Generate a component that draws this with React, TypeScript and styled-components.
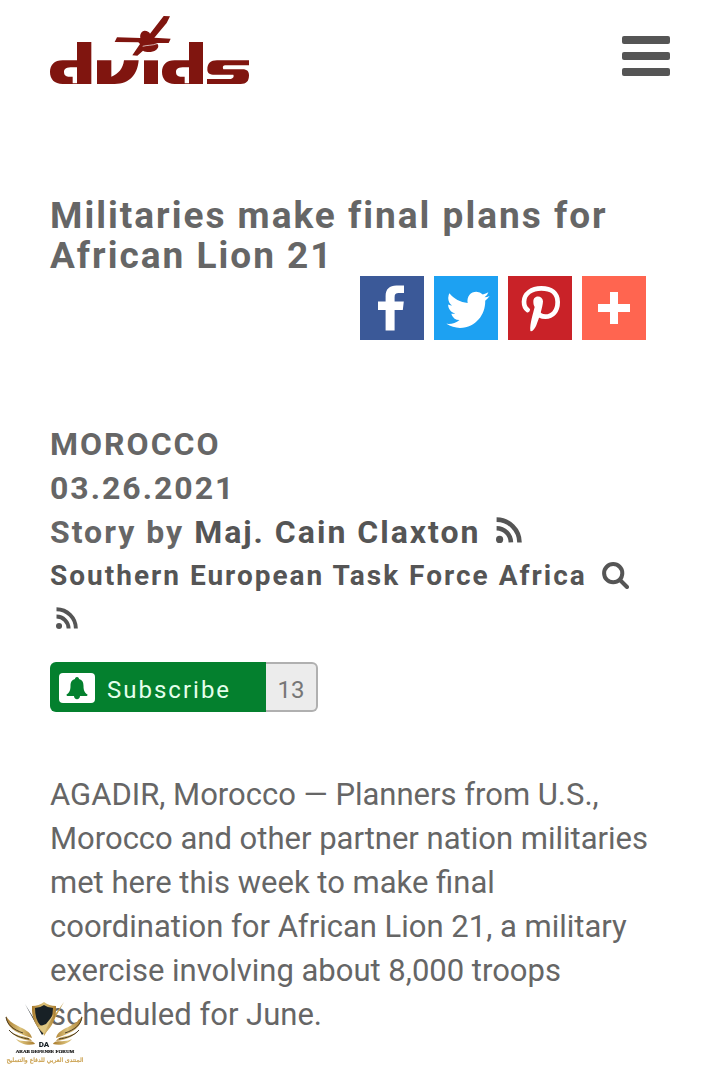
import React from "react";
import styled, { createGlobalStyle } from "styled-components";

const Global = createGlobalStyle`
  * { box-sizing: border-box; }
  body {
    margin: 0;
    background: #fff;
    color: #666;
    font-family: Roboto, "Liberation Sans", sans-serif;
  }
`;

const Page = styled.div`
  padding: 16px 50px 30px;
`;

const Header = styled.header`
  display: flex;
  justify-content: space-between;
  align-items: center;
  height: 80px;
`;

const LogoLink = styled.a`
  display: block;
  height: 80px;
  svg { display: block; }
`;

const MenuButton = styled.button`
  display: flex;
  flex-direction: column;
  gap: 8px;
  width: 48px;
  padding: 0;
  border: 0;
  background: none;
`;

const MenuBar = styled.span`
  height: 8px;
  border-radius: 2px;
  background: #555;
`;

const Title = styled.h1`
  margin: 100px 0 0;
  font-size: 37px;
  line-height: 40px;
  font-weight: 700;
  letter-spacing: 2px;
`;

const ShareRow = styled.nav`
  display: flex;
  justify-content: flex-end;
  gap: 10px;
  padding-right: 24px;
`;

const ShareLink = styled.a<{ $color: string }>`
  width: 64px;
  height: 64px;
  background: ${(p) => p.$color};
  svg { display: block; width: 64px; height: 64px; fill: #fff; }
`;

const Meta = styled.div`
  margin-top: 82px;
  font-size: 32px;
  line-height: 44px;
  font-weight: 700;
  letter-spacing: 2px;
`;

const MetaLine = styled.div<{ $small?: boolean }>`
  font-size: ${(p) => (p.$small ? "28px" : "32px")};
`;

const MetaLink = styled.a`
  color: #555;
  text-decoration: none;
`;

const IconLink = styled(MetaLink)<{ $size: number; $drop?: boolean }>`
  display: inline-block;
  margin: 0 6px;
  letter-spacing: 0;
  svg {
    width: ${(p) => p.$size}px;
    height: ${(p) => p.$size}px;
    vertical-align: ${(p) => (p.$drop ? "-4px" : "baseline")};
  }
`;

const Subscribe = styled.div`
  display: flex;
  width: 268px;
  height: 50px;
  margin-top: 20px;
`;

const SubscribeButton = styled.button`
  display: flex;
  align-items: center;
  gap: 12px;
  width: 216px;
  padding: 6px 9px 0;
  border: 0;
  border-radius: 6px 0 0 6px;
  background: #04802e;
  color: #e4ffec;
  font: 400 24px/30px Roboto, sans-serif;
  letter-spacing: 2px;
`;

const BellBox = styled.span`
  width: 36px;
  height: 30px;
  margin-top: -4px;
  border-radius: 4px;
  background: #fff;
  svg { display: block; margin: 0 auto; }
`;

const Count = styled.span`
  flex: 1;
  padding-top: 2px;
  border: 2px solid #b0b0b0;
  border-left: 0;
  border-radius: 0 6px 6px 0;
  background: #ececec;
  color: #777;
  font-size: 24px;
  line-height: 48px;
  text-align: center;
`;

const Story = styled.p`
  margin: 61px 0 0;
  font-size: 31px;
  line-height: 44px;
`;

const Watermark = styled.div`
  position: fixed;
  left: 4px;
  bottom: 0;
  svg { display: block; }
`;

const DvidsLogo = () => (
  <svg width="200" height="68" viewBox="30 33 600 204" fill="#80150f" role="img" aria-label="dvids">
    <path fillRule="evenodd" d="M111 111H154V237H68C43 237 30 222 30 201C30 180 43 166 68 166H111ZM98 187C80 187 72 191 72 201C72 213 81 215 87 215H98V235H111V187Z" />
    <path d="M171 166H214V215C236 207 249 190 252 166H296C293 207 270 237 224 237H171Z" />
    <path d="M312 166H354V237H312Z" />
    <path fillRule="evenodd" d="M447 111H489V237H404C379 237 366 222 366 201C366 180 379 166 404 166H447ZM434 187C416 187 408 191 408 201C408 213 417 215 423 215H434V235H447V187Z" />
    <path d="M627 166V181H558C549 181 547 185 550 193H607C622 193 627 200 627 210C627 229 619 237 602 237H501V222H568C578 222 583 216 580 209H525C508 209 502 203 502 194C502 175 512 166 531 166Z" />
    <path d="M371 33L390 34L380 54L343 98L392 101L386 114H349C358 120 356 129 348 135C338 142 321 144 309 137L292 152L277 151L300 117L295 112L224 111L231 97L301 99C299 87 304 79 314 77C322 77 328 81 330 86Z" />
    <path d="M308 124C321 120 337 122 351 116" fill="none" stroke="#fff" strokeWidth="2" />
  </svg>
);

const Rss = () => (
  <svg viewBox="0 0 26 26" fill="none" stroke="#555" strokeWidth="4.6" aria-hidden="true">
    <circle cx="3.6" cy="22.4" r="3.6" fill="#555" stroke="none" />
    <path d="M.6 11.2A14.4 14.4 0 0 1 14.9 25.4M.6 2.6A23 23 0 0 1 23.5 25.4" />
  </svg>
);

const Search = () => (
  <svg viewBox="0 0 27 27" fill="none" stroke="#555" strokeWidth="4" aria-hidden="true">
    <circle cx="11.2" cy="11.2" r="9.1" />
    <path d="M18 18L25 25" strokeLinecap="round" />
  </svg>
);

const Bell = () => (
  <svg width="22" height="30" viewBox="0 0 22 30" fill="#04802e" aria-hidden="true">
    <path d="M11 4C12.5 4 13 5 13 6C16.5 7 17.5 9.5 17.5 13C17.5 18 19 20 21.5 21.5C21.5 22.8 21 23 20 23H14C14 25 12.7 26.2 11 26.2S8 25 8 23H2C1 23 .5 22.8 .5 21.5C3 20 4.5 18 4.5 13C4.5 9.5 5.5 7 9 6C9 5 9.5 4 11 4Z" />
  </svg>
);

const shares = [
  {
    name: "Facebook",
    color: "#3b5998",
    art: <path d="M12.8 27.2V17H9v-4.2h3.8V10c0-3.4 2-5.2 5.4-5.2H22v3.7h-2.6c-1.6 0-2.1.7-2.1 2.1v2.2h4.6l-.5 4.2h-4.1v10.2z" />,
  },
  {
    name: "Twitter",
    color: "#1da1f2",
    art: <path transform="translate(2.6 2) scale(.9 .93)" d="M28 8.557a9.913 9.913 0 0 1-2.828.775 4.93 4.93 0 0 0 2.166-2.725 9.738 9.738 0 0 1-3.13 1.194 4.92 4.92 0 0 0-3.593-1.55 4.924 4.924 0 0 0-4.794 6.049c-4.09-.21-7.72-2.17-10.15-5.15a4.942 4.942 0 0 0-.665 2.477c0 1.71.87 3.214 2.19 4.1a4.968 4.968 0 0 1-2.23-.616v.06c0 2.39 1.7 4.38 3.952 4.83-.414.115-.85.174-1.297.174-.318 0-.626-.03-.928-.086a4.935 4.935 0 0 0 4.6 3.42 9.893 9.893 0 0 1-6.114 2.107c-.398 0-.79-.023-1.175-.068a13.953 13.953 0 0 0 7.55 2.213c9.056 0 14.01-7.507 14.01-14.013 0-.213-.005-.426-.015-.637.96-.695 1.795-1.56 2.455-2.55z" />,
  },
  {
    name: "Pinterest",
    color: "#c92228",
    art: (
      <g transform="scale(.16667)">
        <path d="M59 102C52 97 48 88 48 77C48 53 71 37 100 37C130 37 149 52 149 78C149 105 134 122 112 122C101 122 93 118 90 110" fill="none" stroke="#fff" strokeWidth="14" strokeLinecap="round" />
        <path d="M76 76C76 57 104 57 105 76C104 94 94 126 85 148C81 158 71 171 67 164C65 144 76 110 80 93C77 89 76 83 76 76Z" />
      </g>
    ),
  },
  { name: "More", color: "#ff6550", art: <path d="M14 8h4v6h6v4h-6v6h-4v-6H8v-4h6z" /> },
];

const wing = "M2 16C2 26 10 33 28 38C27 32 20 29 14 26C8 23 4 20 2 16ZM5 30C9 36 18 40 28 41C25 36 19 37 14 35C10 34 7 32 5 30ZM12 39C16 44 24 46 31 44C29 40 24 42 20 41C17 41 14 40 12 39Z";

const ForumMark = () => (
  <svg width="84" height="66" viewBox="0 0 84 66" role="img" aria-label="Arab Defense Forum">
    <defs>
      <linearGradient id="gold" x1="0" x2="1">
        <stop offset="0" stopColor="#a87a2c" />
        <stop offset=".5" stopColor="#dcc37c" />
        <stop offset="1" stopColor="#a87a2c" />
      </linearGradient>
    </defs>
    <path d="M21 4L32 22L40 33L38 35Z" fill="#182126" />
    <path d="M60 2L50 20L40 36L39 31Z" fill="#c9a452" />
    <path d="M28 6Q35 6 40 2Q45 6 52 6Q53 23 40 34Q27 23 28 6Z" fill="url(#gold)" />
    <path d="M31 8Q36 8 40 5Q44 8 49 8Q49 20 41 27L36 25Q31 19 31 8Z" fill="#182126" />
    <path d="M50 14L40 33L34 27L42 24Z" fill="#dfc782" />
    <path d={wing} fill="url(#gold)" />
    <path d={wing} transform="translate(80 0) scale(-1 1)" fill="url(#gold)" />
    <path d="M2 17C3 25 10 30 19 33M5 30C10 36 18 38 25 39M78 17C77 25 70 30 61 33M75 30C70 36 62 38 55 39" fill="none" stroke="#493b24" strokeWidth="1" />
    <text x="40" y="47" textAnchor="middle" fill="#182126" fontFamily="Roboto" fontWeight="900" fontSize="8">DA</text>
    <text x="41" y="53" textAnchor="middle" fill="#111" stroke="#111" strokeWidth=".2" fontFamily="Liberation Serif" fontWeight="700" fontSize="5">ARAB DEFENSE FORUM</text>
    <text x="41" y="62" textAnchor="middle" fill="#c79b45" stroke="#c79b45" strokeWidth=".2" fontFamily="DejaVu Sans" fontSize="6" direction="rtl">المنتدى العربي للدفاع والتسليح</text>
  </svg>
);

export default function App() {
  return (
    <>
      <Global />
      <Page>
        <Header>
          <LogoLink href="#"><DvidsLogo /></LogoLink>
          <MenuButton aria-label="Menu"><MenuBar /><MenuBar /><MenuBar /></MenuButton>
        </Header>
        <main>
          <Title>Militaries make final plans for African Lion 21</Title>
          <ShareRow aria-label="Share">
            {shares.map((s) => (
              <ShareLink key={s.name} href="#" aria-label={s.name} $color={s.color}>
                <svg viewBox="0 0 32 32" aria-hidden="true">{s.art}</svg>
              </ShareLink>
            ))}
          </ShareRow>
          <Meta>
            <MetaLine>MOROCCO</MetaLine>
            <MetaLine>03.26.2021</MetaLine>
            <MetaLine>
              Story by <MetaLink href="#">Maj. Cain Claxton</MetaLink>{" "}
              <IconLink href="#" aria-label="Author feed" $size={26}><Rss /></IconLink>
            </MetaLine>
            <MetaLine $small>
              <MetaLink href="#">Southern European Task Force Africa</MetaLink>{" "}
              <IconLink href="#" aria-label="Search unit" $size={27} $drop><Search /></IconLink>{" "}
              <IconLink href="#" aria-label="Unit feed" $size={22}><Rss /></IconLink>
            </MetaLine>
          </Meta>
          <Subscribe>
            <SubscribeButton><BellBox><Bell /></BellBox>Subscribe</SubscribeButton>
            <Count>13</Count>
          </Subscribe>
          <Story>
            AGADIR, Morocco — Planners from U.S., Morocco and other partner nation militaries met here
            this week to make final coordination for African Lion 21, a military exercise involving
            about 8,000 troops scheduled for June.
          </Story>
        </main>
      </Page>
      <Watermark><ForumMark /></Watermark>
    </>
  );
}
